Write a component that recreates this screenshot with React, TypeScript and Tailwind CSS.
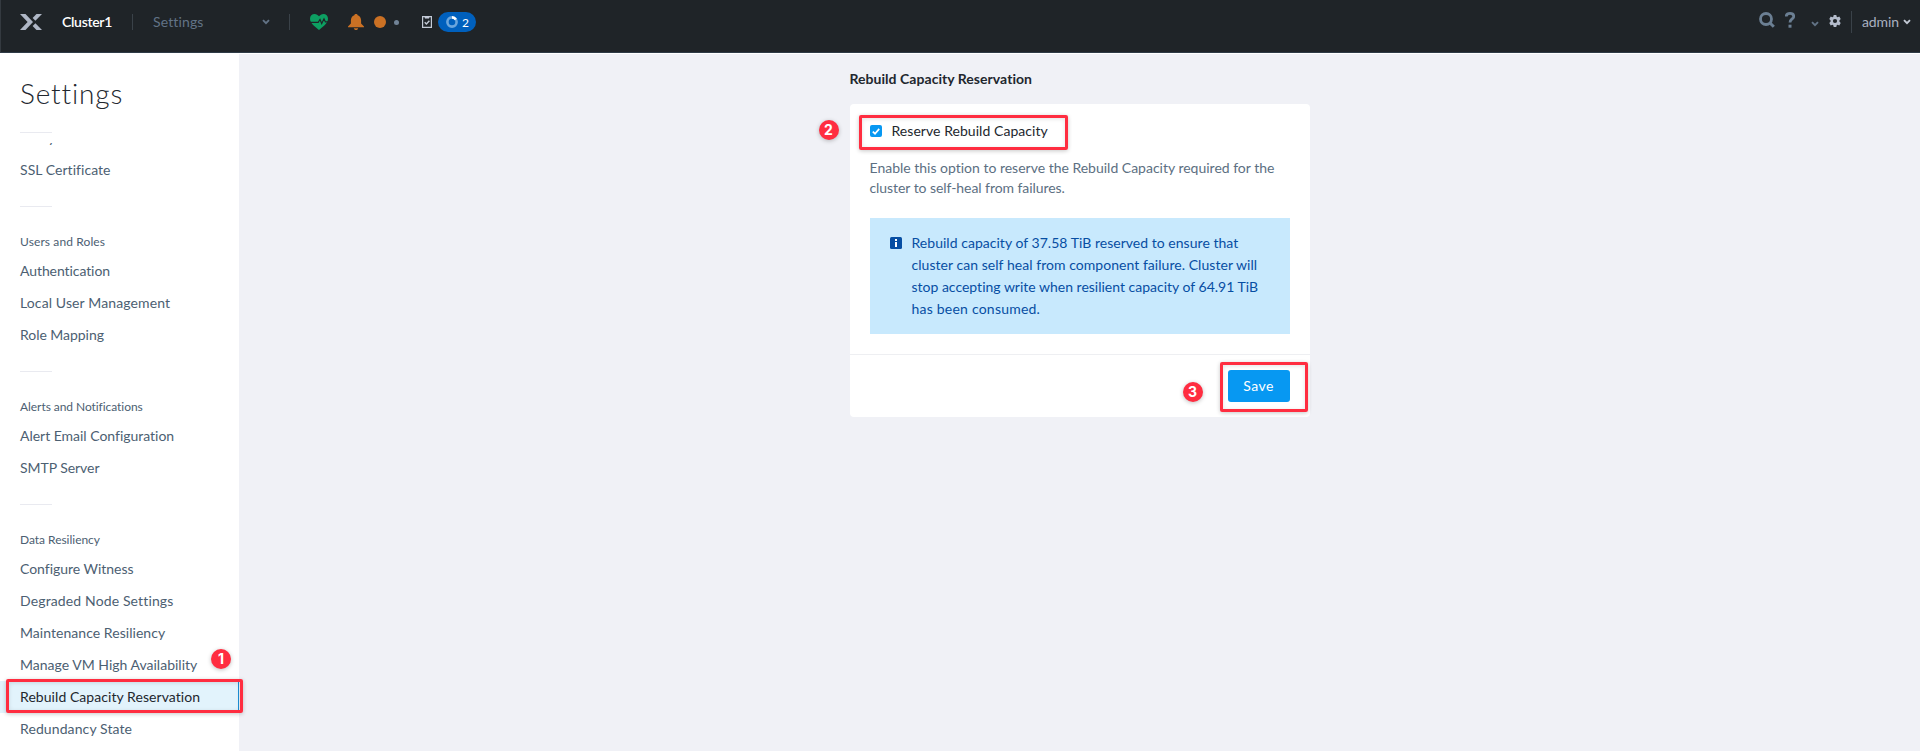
import type { ReactNode } from 'react';

type Item = { label: string; tracking: string; active?: boolean };
type Group = { title: string; tracking: string; items: Item[] };

const groups: Group[] = [
  {
    title: 'Users and Roles',
    tracking: 'tracking-[0.113px]',
    items: [
      { label: 'Authentication', tracking: 'tracking-[-0.08px]' },
      { label: 'Local User Management', tracking: 'tracking-[0.116px]' },
      { label: 'Role Mapping', tracking: 'tracking-[-0.04px]' },
    ],
  },
  {
    title: 'Alerts and Notifications',
    tracking: 'tracking-[-0.06px]',
    items: [
      { label: 'Alert Email Configuration', tracking: 'tracking-[-0.02px]' },
      { label: 'SMTP Server', tracking: 'tracking-[-0.053px]' },
    ],
  },
  {
    title: 'Data Resiliency',
    tracking: 'tracking-[-0.029px]',
    items: [
      { label: 'Configure Witness', tracking: 'tracking-[-0.03px]' },
      { label: 'Degraded Node Settings', tracking: 'tracking-[0.135px]' },
      { label: 'Maintenance Resiliency', tracking: 'tracking-[0.045px]' },
      { label: 'Manage VM High Availability', tracking: 'tracking-[0.01px]' },
      { label: 'Rebuild Capacity Reservation', tracking: 'tracking-[0.06px]', active: true },
      { label: 'Redundancy State', tracking: 'tracking-[0.102px]' },
    ],
  },
];

function Chevron({ className }: { className: string }) {
  return (
    <svg viewBox="0 0 8 6" className={className} fill="none" stroke="currentColor" strokeWidth="1.9">
      <path d="M1 1.2 4 4.2 7 1.2" />
    </svg>
  );
}

function Step({ n, className }: { n: number; className: string }) {
  return (
    <span
      className={`absolute flex size-5 items-center justify-center rounded-full bg-[#ff2d40] font-['Inter',sans-serif] text-sm leading-none font-bold text-white shadow-[0_1px_4px_rgba(0,0,0,0.25)] ${className}`}
    >
      {n}
    </span>
  );
}

function Outline({ className }: { className: string }) {
  return (
    <span
      className={`pointer-events-none absolute rounded-[2px] border-[3px] border-[#ff2d40] shadow-[0_1px_4px_rgba(0,0,0,0.22),inset_0_1px_4px_rgba(0,0,0,0.12)] ${className}`}
    />
  );
}

function Divider() {
  return <div className="ml-5 h-px w-8 bg-[#e9eaf0]" />;
}

function Header() {
  return (
    <header className="flex h-[53px] shrink-0 items-start justify-between border-b border-l border-b-[#2f3b47] border-l-[#343a40] bg-[#1f2428]">
      <div className="flex h-11 items-center">
        <svg viewBox="0 0 22 16" className="ml-[19px] h-4 w-[22px]" fill="#afb7c6">
          <path d="M0 0H5.5L13 8 5.5 16H0L7.6 8Z" />
          <path d="M16.5 0H22L15.4 6.8 12.6 3.9Z" />
          <path d="M15.4 9.2 22 16H16.5L12.6 12.1Z" />
        </svg>
        <span className="ml-5 w-[70px] text-sm font-semibold tracking-[-0.3px] text-white">Cluster1</span>
        <span className="h-4 w-px bg-[#3a4249]" />
        <span className="ml-5 w-[109px] text-sm tracking-[0.132px] text-[#627386]">Settings</span>
        <Chevron className="h-[6px] w-2 text-[#627386]" />
        <span className="ml-[19px] h-4 w-px bg-[#3a4249]" />
        <svg viewBox="0 0 18 16" className="ml-5 h-4 w-[18px]">
          <path
            d="M9 16C6 13.5 0 9.5 0 4.8C0 2 2 0 4.6 0C6.5 0 7.9 1 9 2.3C10.1 1 11.5 0 13.4 0C16 0 18 2 18 4.8C18 9.5 12 13.5 9 16Z"
            fill="#0d9f62"
          />
          <path d="M0 8.3H8.2L10 5.5L11.7 9.6L14 4.8L15.4 7.9H18" fill="none" stroke="#1f2428" strokeWidth="1.2" />
        </svg>
        <svg viewBox="0 0 16 16" className="ml-5 h-4 w-4" fill="#cb7124">
          <path d="M8 0C8.9 0 9.5 .5 9.7 1.2C12 2 13 4 13.1 6.500V9.500L16 12.600V13.200H0V12.600L2.900 9.500V6.500C3 4 4 2 6.300 1.200C6.500 .5 7.100 0 8 0Z" />
          <path d="M5.800 14.200H10.200C10 15.300 9.100 16 8 16S6 15.300 5.800 14.200Z" />
        </svg>
        <span className="ml-2.5 size-3 rounded-full bg-[#cb7124]" />
        <span className="ml-2 size-[5px] rounded-full bg-[#718397]" />
        <svg viewBox="0 0 10 12" className="ml-[23px] h-3 w-2.5" fill="none" stroke="#c3cad6">
          <path d="M.6 .6H9.4V11.4H.6Z" strokeWidth="1.2" />
          <path d="M3 .8H7V2.2H3Z" fill="#c3cad6" strokeWidth=".6" />
          <path d="M2.7 6.3L4.4 8L7.4 4.7" strokeWidth="1.4" />
        </svg>
        <span className="ml-1.5 flex h-5 w-[38px] items-center rounded-full bg-[#0060bd]">
          <svg viewBox="0 0 12 12" className="ml-2 h-3 w-3" fill="none" strokeWidth="2.6">
            <circle cx="6" cy="6" r="4.6" stroke="#6ba6dd" />
            <path d="M6 1.4A4.6 4.6 0 0 1 9.8 3.4" stroke="#fff" />
          </svg>
          <span className="ml-1 pt-px text-xs text-white">2</span>
        </span>
      </div>
      <div className="flex h-11 items-center">
        <svg viewBox="0 0 16 16" className="mt-[-4px] h-4 w-4" fill="none" stroke="#6b7f93">
          <circle cx="7" cy="7" r="5.5" strokeWidth="2.8" />
          <path d="M11 11L14.8 14.8" strokeWidth="3" />
        </svg>
        <svg viewBox="0 0 10 16" className="mt-[-4px] ml-2.5 h-4 w-2.5" fill="none" stroke="#6b7f93">
          <path d="M1.2 4.5C1.3 2.5 2.9 1.4 5 1.4S8.7 2.5 8.7 4.4C8.7 7 5 7 5 10.5" strokeWidth="2.8" />
          <path d="M3.5 12.7H6.5V15.7H3.5Z" fill="#6b7f93" stroke="none" />
        </svg>
        <Chevron className="mt-1 ml-4 h-[6px] w-2 text-[#627386]" />
        <svg viewBox="0 0 12 12" className="mt-[-2px] ml-2.5 h-3 w-3">
          <path
            fill="#b4bccb"
            fillRule="evenodd"
            d="M4.7 0H7.3L7.7 1.7L8.6 2.2L10.3 1.6L11.7 4L10.4 5.4V6.6L11.7 8L10.3 10.4L8.6 9.8L7.7 10.3L7.3 12H4.7L4.3 10.3L3.4 9.8L1.7 10.4L.3 8L1.6 6.6V5.4L.3 4L1.7 1.6L3.4 2.2L4.3 1.7ZM6 3.9A2.1 2.1 0 1 0 6 8.1A2.1 2.1 0 0 0 6 3.9Z"
          />
        </svg>
        <span className="ml-2.5 h-[22px] w-px bg-[#3a4249]" />
        <span className="ml-2.5 w-[41px] text-sm tracking-[-0.125px] text-[#aab1c0]">admin</span>
        <Chevron className="mr-[9px] h-[6px] w-2 text-[#c3cad6]" />
      </div>
    </header>
  );
}

function NavItem({ item }: { item: Item }) {
  if (!item.active) {
    return <li className={`h-8 pl-5 leading-8 ${item.tracking}`}>{item.label}</li>;
  }
  return (
    <li className={`relative h-8 border-r border-[#1b8fd6] bg-[#e2f3fc] pl-5 leading-8 text-[#22272e] ${item.tracking}`}>
      {item.label}
      <Outline className="top-[-2px] right-[-5px] bottom-0 left-[6px]" />
      <Step n={1} className="top-[-32px] right-[7px]" />
    </li>
  );
}

function Sidebar() {
  return (
    <aside className="w-[239px] shrink-0 overflow-visible bg-white text-sm text-[#4c6072]">
      <h1 className="h-[79px] pt-5 pl-5 text-[28px] leading-10 font-light tracking-[0.85px] text-[#22272e]">Settings</h1>
      <Divider />
      <div className="mt-[10px] flex h-[3px] items-end overflow-hidden pl-5">
        <span className="h-4 leading-4">Filesystem Whitelists</span>
      </div>
      <div className="mt-2 h-8 pl-5 leading-8 tracking-[0.05px]">SSL Certificate</div>
      {groups.map((g) => (
        <section key={g.title} className="pt-5">
          <Divider />
          <h2 className={`mt-[21px] h-[27px] pl-5 text-xs leading-[27px] ${g.tracking}`}>{g.title}</h2>
          <ul>
            {g.items.map((i) => (
              <NavItem key={i.label} item={i} />
            ))}
          </ul>
        </section>
      ))}
    </aside>
  );
}

function Line({ className, children }: { className: string; children: ReactNode }) {
  return <span className={`block whitespace-nowrap ${className}`}>{children}</span>;
}

function Panel() {
  return (
    <div className="w-[460px]">
      <h2 className="h-[50px] pt-[15px] text-sm leading-5 font-bold tracking-[0.04px] text-[#22272e]">Rebuild Capacity Reservation</h2>
      <div className="relative h-[313px] rounded bg-white">
        <div className="h-[250px] px-5 pt-[17px]">
          <label className="flex h-5 items-center text-sm tracking-[0.05px] text-[#22272e]">
            <span className="mr-[10px] flex size-3 items-center justify-center rounded-[2px] bg-[#0798f2]">
              <svg viewBox="0 0 8 7" className="h-[7px] w-2" fill="none" stroke="#fff" strokeWidth="1.7">
                <path d="M.8 3.6L3 5.7L7.2 .9" />
              </svg>
            </span>
            Reserve Rebuild Capacity
          </label>
          <p className="mt-[17px] text-sm leading-5 text-[#5c6f82]">
            <Line className="tracking-[-0.005px]">Enable this option to reserve the Rebuild Capacity required for the</Line>
            <Line className="tracking-[-0.06px]">cluster to self-heal from failures.</Line>
          </p>
          <div className="mt-5 flex h-[116px] bg-[#c8e9fd] pt-[14px] pl-5 text-sm leading-[22px] text-[#074ea3]">
            <svg viewBox="0 0 12 12" className="mt-[5px] mr-[10px] h-3 w-3">
              <rect width="12" height="12" rx="1.5" fill="#074ea3" />
              <path d="M5 2H7V4H5ZM5 5H7V10H5Z" fill="#fff" />
            </svg>
            <p>
              <Line className="tracking-[0.03px]">Rebuild capacity of 37.58 TiB reserved to ensure that</Line>
              <Line className="tracking-[0.045px]">cluster can self heal from component failure. Cluster will</Line>
              <Line className="tracking-[-0.002px]">stop accepting write when resilient capacity of 64.91 TiB</Line>
              <Line className="tracking-[0.22px]">has been consumed.</Line>
            </p>
          </div>
        </div>
        <div className="flex h-[63px] justify-end border-t border-[#eeeff2] pt-[15px] pr-5">
          <button className="h-8 w-[62px] rounded-[3px] bg-[#0798f2] text-sm tracking-[0.42px] text-white">Save</button>
        </div>
        <Outline className="top-[11px] left-[9px] h-[35px] w-[209px]" />
        <Step n={2} className="top-[16px] left-[-31px]" />
        <Outline className="right-[2px] bottom-[5px] h-[50px] w-[88px]" />
        <Step n={3} className="right-[107px] bottom-[15px]" />
      </div>
    </div>
  );
}

export default function App() {
  return (
    <div className="flex h-[751px] w-[1920px] flex-col overflow-hidden bg-[#f0f1f6] font-['Lato',sans-serif] [font-variant-ligatures:none]">
      <Header />
      <div className="flex flex-1">
        <Sidebar />
        <main className="flex flex-1 justify-center border-t border-white">
          <Panel />
        </main>
      </div>
    </div>
  );
}
